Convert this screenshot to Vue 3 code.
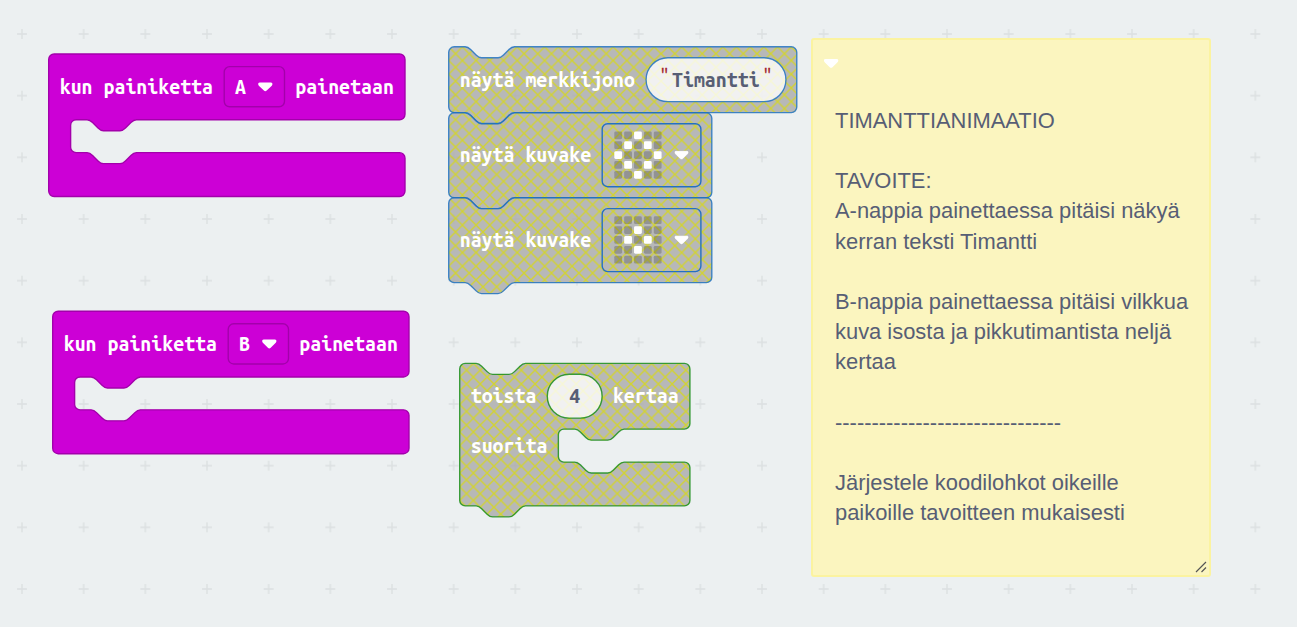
<script setup>
const S = 1.3704

// Connector outline, drawn left-to-right and right-to-left
const notch = 'c2,0 3,1 4,2 l4,4 c1,1 2,2 4,2 h12 c2,0 3,-1 4,-2 l4,-4 c1,-1 2,-2 4,-2'
const notchBack = 'c-2,0 -3,1 -4,2 l-4,4 c-1,1 -2,2 -4,2 h-12 c-2,0 -3,-1 -4,-2 l-4,-4 c-1,-1 -2,-2 -4,-2'

const corner = 'a4,4 0 0 1 '

function stackPath(w, h) {
  return `M0,4 ${corner}4,-4 h8 ${notch} H${w - 4} ${corner}4,4 V${h - 4} ${corner}-4,4 H48 ${notchBack} H4 ${corner}-4,-4 z`
}

function cPath(w, inset, connected) {
  const top = connected ? `h8 ${notch}` : ''
  const bottom = connected ? `H48 ${notchBack}` : ''
  return `M0,4 ${corner}4,-4 ${top} H${w - 4} ${corner}4,4 V44 ${corner}-4,4 ` +
    `H${inset + 48} ${notchBack} h-8 a4,4 0 0 0 -4,4 v16 a4,4 0 0 0 4,4 h8 ${notch} ` +
    `H${w - 4} ${corner}4,4 V100 ${corner}-4,4 ${bottom} H4 ${corner}-4,-4 z`
}

const CH = 10.95
const len = (t) => t.length * CH

const events = [
  { x: 48.7, y: 54, key: 'A' },
  { x: 52.7, y: 311.2, key: 'B' },
]

const icons = [
  { x: 448.7, y: 112.8, leds: ['00100', '01010', '10001', '01010', '00100'] },
  { x: 448.7, y: 197.7, leds: ['00000', '00100', '01010', '00100', '00000'] },
]
const cells = (rows) => rows.flatMap((r, j) => [...r].map((v, i) => ({ i, j, on: v === '1' })))

const caret = 'M1.5,0 H12.7 Q14.6,0 14.2,2 Q14,3 12.8,4 L8.5,8.2 Q7.1,9.5 5.7,8.2 L1.4,4 Q0.2,3 0,2 Q-0.4,0 1.5,0 z'

const note = `TIMANTTIANIMAATIO

TAVOITE:
A-nappia painettaessa pitäisi näkyä
kerran teksti Timantti

B-nappia painettaessa pitäisi vilkkua
kuva isosta ja pikkutimantista neljä
kertaa

${'-'.repeat(31)}

Järjestele koodilohkot oikeille
paikoille tavoitteen mukaisesti`
</script>

<template>
  <main class="workspace">
    <svg class="canvas" width="1297" height="627">
      <defs>
        <pattern id="grid" x="-8.83" y="3.17" width="61.667" height="61.667" patternUnits="userSpaceOnUse">
          <path d="M25.8,30.83 h10 M30.83,25.8 v10" class="cross" />
        </pattern>
        <pattern id="hatch" width="10" height="10" patternUnits="userSpaceOnUse">
          <rect width="10" height="10" fill="#aaa" />
          <path d="M0,0 L10,10 M10,0 L0,10" stroke="#cc0" />
        </pattern>
      </defs>
      <rect width="1297" height="627" fill="url(#grid)" />

      <g v-for="e in events" :key="e.key" :transform="`translate(${e.x},${e.y})`">
        <path class="event" :d="cPath(260, 16, false)" :transform="`scale(${S})`" />
        <text class="label" x="11" y="40" :textLength="len('kun painiketta')" lengthAdjust="spacingAndGlyphs">kun painiketta</text>
        <rect class="event" x="175.5" y="12.6" width="60.3" height="40.2" rx="5.5" stroke-width="1.37" />
        <text class="label" x="186.3" y="40" :textLength="CH" lengthAdjust="spacingAndGlyphs">{{ e.key }}</text>
        <path :d="caret" fill="#fff" transform="translate(209.5,28.4)" />
        <text class="label" x="246.6" y="40" :textLength="len('painetaan')" lengthAdjust="spacingAndGlyphs">painetaan</text>
      </g>

      <g transform="translate(448.7,46.8)">
        <path class="off basic" :d="stackPath(254, 48)" :transform="`scale(${S})`" />
        <text class="label" x="11" y="40.2" :textLength="len('näytä merkkijono')" lengthAdjust="spacingAndGlyphs">näytä merkkijono</text>
        <rect class="pill basic" x="197.4" y="11" width="139.8" height="43.8" rx="21.9" />
        <text class="quote" x="210.4" y="35" :textLength="CH" lengthAdjust="spacingAndGlyphs">"</text>
        <text class="label value" x="223.3" y="40.2" :textLength="len('Timantti')" lengthAdjust="spacingAndGlyphs">Timantti</text>
        <text class="quote" x="313.3" y="35" :textLength="CH" lengthAdjust="spacingAndGlyphs">"</text>
      </g>

      <g v-for="b in icons" :key="b.y" :transform="`translate(${b.x},${b.y})`">
        <path class="off basic" :d="stackPath(192, 62)" :transform="`scale(${S})`" />
        <text class="label" x="11" y="49.4" :textLength="len('näytä kuvake')" lengthAdjust="spacingAndGlyphs">näytä kuvake</text>
        <rect class="frame" x="153.5" y="10.9" width="98.7" height="63" rx="5.5" />
        <rect
          v-for="c in cells(b.leds)" :key="`${c.i}-${c.j}`"
          :class="c.on ? 'led on' : 'led'"
          :x="165.6 + c.i * 9.87" :y="18.6 + c.j * 9.87" width="7.8" height="7.8" rx="1.4"
        />
        <path class="caret" :d="caret" transform="translate(225.7,37.9)" />
      </g>

      <g transform="translate(459.7,363.4)">
        <path class="off loop" :d="cPath(168, 72, true)" :transform="`scale(${S})`" />
        <text class="label" x="11" y="39.8" :textLength="len('toista')" lengthAdjust="spacingAndGlyphs">toista</text>
        <rect class="pill loop" x="87.6" y="10.9" width="54.8" height="43.8" rx="21.9" />
        <text class="label value" x="109.5" y="39.8" :textLength="CH" lengthAdjust="spacingAndGlyphs">4</text>
        <text class="label" x="153.2" y="39.8" :textLength="len('kertaa')" lengthAdjust="spacingAndGlyphs">kertaa</text>
        <text class="label" x="11" y="89.8" :textLength="len('suorita')" lengthAdjust="spacingAndGlyphs">suorita</text>
      </g>
    </svg>

    <aside class="note">
      <svg class="toggle" width="15" height="10"><path :d="caret" fill="#fff" /></svg>
      <p class="body">{{ note }}</p>
      <svg class="grip" width="12" height="12">
        <path d="M1,11 L11,1 M6.5,11 L11,6.5" />
      </svg>
    </aside>
  </main>
</template>

<style scoped>
.workspace {
  position: relative;
  width: 1297px;
  height: 627px;
  overflow: hidden;
  background: #ecf0f1;
}
.canvas { display: block; }
.cross { stroke: #dce0e1; stroke-width: 1.4; fill: none; }
.event { fill: #cc00d6; stroke: #a300ab; }
.off { fill: url(#hatch); fill-opacity: 0.8; stroke-opacity: 0.8; }
.basic { stroke: #176dc0; }
.loop { stroke: #0f8a0f; }
.pill { fill: #fff; fill-opacity: 0.8; stroke-width: 1.37; stroke-opacity: 0.8; }
.frame { fill: none; stroke: #2470c2; stroke-width: 1.4; }
.led { fill: #000; fill-opacity: 0.2; }
.led.on { fill: #fff; fill-opacity: 1; }
.caret { fill: #fff; stroke: #888; stroke-opacity: 0.25; }
.label {
  font: bold 20.9px "Ubuntu Mono", "DejaVu Sans Mono", monospace;
  fill: #fff;
}
.label.value { fill: #575e75; }
.quote {
  font: 19.5px "Ubuntu Mono", "DejaVu Sans Mono", monospace;
  fill: #a01828;
  stroke: #a01828;
  stroke-width: 0.3;
}
.note {
  position: absolute;
  left: 811px;
  top: 38px;
  box-sizing: border-box;
  width: 400px;
  height: 538.5px;
  border: 2px solid #fbf3a0;
  border-radius: 3px;
  background: #fbf5bf;
}
.toggle { position: absolute; left: 10.5px; top: 18.5px; }
.body {
  margin: 65.9px 0 0 22px;
  font: 21.91px/30.17px "Liberation Sans", Arial, sans-serif;
  color: #575e75;
  white-space: pre;
}
.grip { position: absolute; right: 2px; bottom: 2px; fill: none; stroke: #555; stroke-width: 1.2; }
</style>

<style>
body { margin: 0; }
</style>
